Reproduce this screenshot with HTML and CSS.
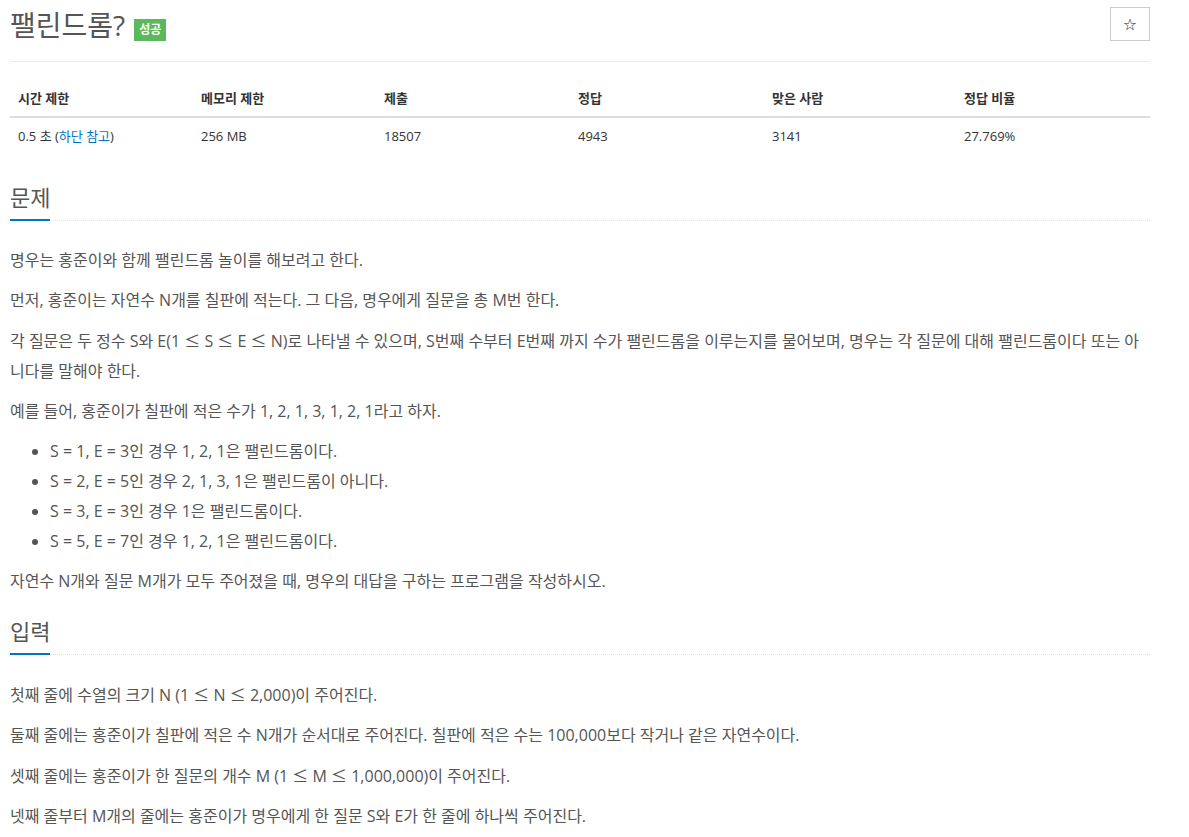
FILE: index.html
```html
<!DOCTYPE html>
<html lang="ko">
<head>
    <meta charset="UTF-8">
    <meta name="viewport" content="width=device-width, initial-scale=1.0">
    <title>팰린드롬?</title>
    <link rel="stylesheet" href="styles.css">
</head>
<body>
    <div class="container">
        <div class="page-header">
            <h1>
                <span class="problem-title">팰린드롬?</span>
                <span class="label-success">성공</span>
            </h1>
            <button class="star-btn" title="즐겨찾기">☆</button>
        </div>

        <table class="problem-info">
            <thead>
                <tr>
                    <th class="col-time">시간 제한</th>
                    <th class="col-memory">메모리 제한</th>
                    <th class="col-submit">제출</th>
                    <th class="col-accepted">정답</th>
                    <th class="col-users">맞은 사람</th>
                    <th class="col-ratio">정답 비율</th>
                </tr>
            </thead>
            <tbody>
                <tr>
                    <td>0.5 초 (<a href="#">하단 참고</a>)</td>
                    <td>256 MB</td>
                    <td>18507</td>
                    <td>4943</td>
                    <td>3141</td>
                    <td>27.769%</td>
                </tr>
            </tbody>
        </table>

        <section class="problem-section">
            <div class="headline">
                <h2>문제</h2>
            </div>
            <div class="problem-text">
                <p>명우는 홍준이와 함께 팰린드롬 놀이를 해보려고 한다.</p>
                <p>먼저, 홍준이는 자연수 N개를 칠판에 적는다. 그 다음, 명우에게 질문을 총 M번 한다.</p>
                <p>각 질문은 두 정수 S와 E(1 <span class="op">≤</span> S <span class="op">≤</span> E <span class="op">≤</span> N)로 나타낼 수 있으며, S번째 수부터 E번째 까지 수가 팰린드롬을 이루는지를 물어보며, 명우는 각 질문에 대해 팰린드롬이다 또는 아니다를 말해야 한다.</p>
                <p>예를 들어, 홍준이가 칠판에 적은 수가 1, 2, 1, 3, 1, 2, 1라고 하자.</p>
                <ul>
                    <li>S = 1, E = 3인 경우 1, 2, 1은 팰린드롬이다.</li>
                    <li>S = 2, E = 5인 경우 2, 1, 3, 1은 팰린드롬이 아니다.</li>
                    <li>S = 3, E = 3인 경우 1은 팰린드롬이다.</li>
                    <li>S = 5, E = 7인 경우 1, 2, 1은 팰린드롬이다.</li>
                </ul>
                <p>자연수 N개와 질문 M개가 모두 주어졌을 때, 명우의 대답을 구하는 프로그램을 작성하시오.</p>
            </div>
        </section>

        <section class="problem-section">
            <div class="headline">
                <h2>입력</h2>
            </div>
            <div class="problem-text">
                <p>첫째 줄에 수열의 크기 N (1 <span class="op">≤</span> N <span class="op">≤</span> 2,000)이 주어진다.</p>
                <p>둘째 줄에는 홍준이가 칠판에 적은 수 N개가 순서대로 주어진다. 칠판에 적은 수는 100,000보다 작거나 같은 자연수이다.</p>
                <p>셋째 줄에는 홍준이가 한 질문의 개수 M (1 <span class="op">≤</span> M <span class="op">≤</span> 1,000,000)이 주어진다.</p>
                <p>넷째 줄부터 M개의 줄에는 홍준이가 명우에게 한 질문 S와 E가 한 줄에 하나씩 주어진다.</p>
            </div>
        </section>
    </div>
</body>
</html>
```

FILE: styles.css
```css
body {
    margin: 0;
    font-family: 'Open Sans', 'Noto Sans CJK KR', sans-serif;
    color: #555;
    background: #ffffff;
}
.container {
    width: 1140px;
    padding: 0 10px;
}
.page-header {
    display: flex;
    justify-content: space-between;
    align-items: flex-start;
    padding: 7px 0 19px 0;
    border-bottom: 1px solid #eee;
}
.page-header h1 {
    display: flex;
    align-items: center;
    margin: 1px 0 0 0;
    font-size: 28px;
    font-weight: normal;
    line-height: 34px;
    color: #555;
}
.label-success {
    display: inline-block;
    margin: 10px 0 0 9px;
    padding: 0 5px;
    height: 22px;
    line-height: 22px;
    font-size: 12px;
    font-weight: bold;
    color: #ffffff;
    background-color: #5cb85c;
}
.star-btn {
    width: 40px;
    height: 34px;
    padding: 0;
    border: 1px solid #ccc;
    background: #ffffff;
    color: #222;
    font-family: 'DejaVu Sans', sans-serif;
    font-size: 16px;
    cursor: pointer;
}
.problem-info {
    width: 1140px;
    margin-top: 18px;
    border-collapse: collapse;
    table-layout: fixed;
    font-size: 13px;
    color: #333;
}
.problem-info th,
.problem-info td {
    box-sizing: border-box;
    padding: 8px;
    line-height: 20px;
    text-align: left;
}
.problem-info th {
    border-bottom: 2px solid #ddd;
    font-weight: bold;
}
.col-time, .col-memory { width: 183px; }
.col-submit, .col-accepted, .col-ratio { width: 194px; }
.col-users { width: 192px; }
.problem-info a {
    color: #0076c0;
    text-decoration: none;
}
.problem-section {
    margin-top: 31px;
}
.problem-section + .problem-section {
    margin-top: 23px;
}
.headline {
    border-bottom: 1px dotted #e0e0e0;
    margin-bottom: 24px;
}
.headline h2 {
    display: inline-block;
    margin: 0 0 -1px 0;
    padding-bottom: 10px;
    font-size: 22px;
    font-weight: normal;
    line-height: 24px;
    color: #555;
    border-bottom: 2px solid #0076c0;
}
.problem-text {
    font-size: 16px;
    line-height: 30px;
}
.problem-text p {
    margin: 0 0 10px 0;
}
.problem-text ul {
    margin: 0 0 10px 0;
    padding-left: 40px;
}
.op {
    font-family: 'Noto Sans CJK KR', sans-serif;
}
```
